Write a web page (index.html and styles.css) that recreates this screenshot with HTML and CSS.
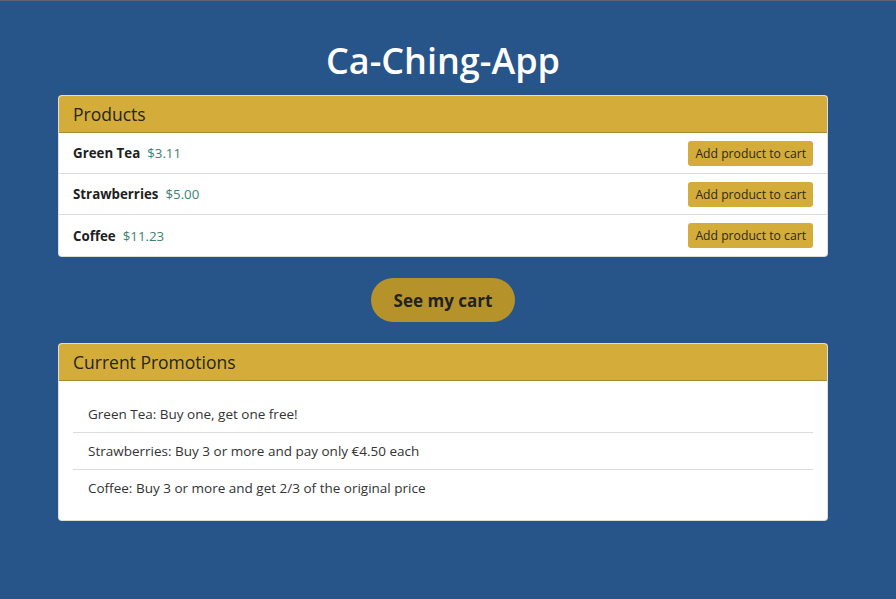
FILE: index.html
```html
<!DOCTYPE html>
<html lang="en">
<head>
<meta charset="utf-8">
<title>Ca-Ching-App</title>
<link rel="stylesheet" href="styles.css">
</head>
<body>
<div class="page">
  <h1 class="title">Ca-Ching-App</h1>
  <section class="card">
    <div class="card-header">Products</div>
    <ul class="products">
      <li class="product">
        <span class="name">Green Tea</span><span class="price">$3.11</span>
        <button class="add-btn">Add product to cart</button>
      </li>
      <li class="product">
        <span class="name">Strawberries</span><span class="price">$5.00</span>
        <button class="add-btn">Add product to cart</button>
      </li>
      <li class="product">
        <span class="name">Coffee</span><span class="price">$11.23</span>
        <button class="add-btn">Add product to cart</button>
      </li>
    </ul>
  </section>
  <button class="cart-btn">See my cart</button>
  <section class="card">
    <div class="card-header">Current Promotions</div>
    <div class="card-body">
      <ul class="promos">
        <li class="promo">Green Tea: Buy one, get one free!</li>
        <li class="promo">Strawberries: Buy 3 or more and pay only €4.50 each</li>
        <li class="promo">Coffee: Buy 3 or more and get 2/3 of the original price</li>
      </ul>
    </div>
  </section>
</div>
</body>
</html>
```
FILE: styles.css
```css
* { box-sizing: border-box; }
html, body { margin: 0; padding: 0; }
body {
  background: #275489;
  border-top: 1px solid #5b6375;
  font-family: "Open Sans", "Noto Sans", sans-serif;
  color: #212529;
  height: 599px;
}
.page {
  display: flex;
  flex-direction: column;
  align-items: center;
  padding: 38px 68px 0 58px;
}
.title {
  margin: 0 0 12px;
  font-size: 36px;
  line-height: 44px;
  font-weight: 600;
  color: #ffffff;
  letter-spacing: 0;
}
.card {
  width: 770px;
  background: #ffffff;
  border: 1px solid rgba(0,0,0,0.13);
  border-radius: 4px;
  overflow: hidden;
}
.card-header {
  background: #d4ac3a;
  border-bottom: 1px solid #a98a33;
  padding: 6px 14px;
  font-size: 17.5px;
  line-height: 24px;
  color: #26261c;
}
.products, .promos {
  list-style: none;
  margin: 0;
  padding: 0;
}
.product {
  display: flex;
  align-items: center;
  height: 41px;
  padding: 0 14px;
  border-bottom: 1px solid #dcdcdc;
  font-size: 13.3px;
}
.product:last-child { border-bottom: none; height: 41px; }
.name {
  font-weight: 700;
  color: #1e1e1e;
  margin-right: 7px;
}
.price {
  color: #3a8272;
}
.add-btn {
  margin-left: auto;
  background: #d4ac3a;
  border: none;
  border-radius: 3px;
  padding: 0 7px;
  height: 25px;
  font-family: inherit;
  font-size: 12.2px;
  color: #2e2a1a;
}
.cart-btn {
  margin: 21px 0;
  width: 144px;
  height: 44px;
  border: none;
  border-radius: 22px;
  background: #b5932a;
  font-family: inherit;
  font-size: 17px;
  font-weight: 700;
  color: #222222;
}
.card-body {
  padding: 15px 14px 14px;
}
.promo {
  height: 37px;
  padding: 0 15px;
  display: flex;
  align-items: center;
  font-size: 13.5px;
  color: #333333;
  border-bottom: 1px solid #dcdcdc;
}
.promo:last-child { border-bottom: none; height: 36px; }
```
